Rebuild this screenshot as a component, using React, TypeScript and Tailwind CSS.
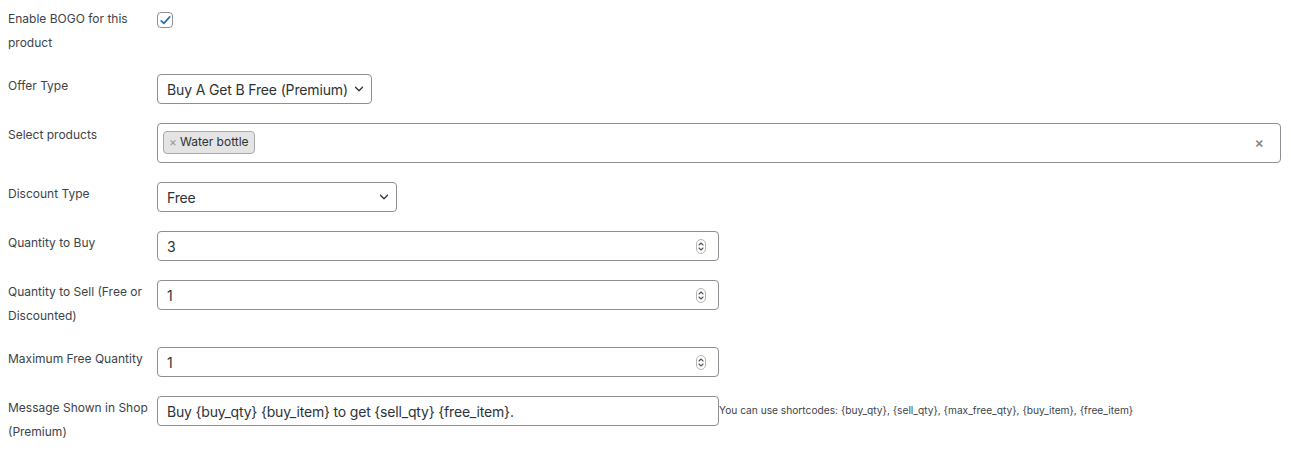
import React from "react";

const labelCls = "w-[149px] shrink-0 text-[12px] leading-6 text-[#3c434a]";
const boxCls =
  "h-[30px] border border-[#8c8f94] rounded-[4px] bg-white flex items-center text-[14px] text-[#2c3338]";

const Chevron = () => (
  <svg width="14" height="14" viewBox="0 0 20 20" fill="none">
    <path d="M5 7.5l5 5 5-5" stroke="#2c3338" strokeWidth="1.8" strokeLinecap="round" strokeLinejoin="round" />
  </svg>
);

const Spinner = () => (
  <svg width="10" height="15" viewBox="0 0 10 15" fill="none">
    <rect x="0.5" y="0.5" width="9" height="14" rx="4.5" stroke="#b4b4b4" />
    <path d="M3 6l2-2 2 2" stroke="#555" strokeWidth="1.1" strokeLinecap="round" strokeLinejoin="round" />
    <path d="M3 9l2 2 2-2" stroke="#555" strokeWidth="1.1" strokeLinecap="round" strokeLinejoin="round" />
  </svg>
);

const Row = ({ label, children }: { label: React.ReactNode; children: React.ReactNode }) => (
  <div className="flex items-start">
    <div className={labelCls}>{label}</div>
    <div className="flex-1 min-w-0">{children}</div>
  </div>
);

const SelectBox = ({ value, width }: { value: string; width: string }) => (
  <div className={boxCls + " justify-between pl-[9px] pr-[5px] " + width}>
    <span className="tracking-[-0.15px]">{value}</span>
    <Chevron />
  </div>
);

const NumberBox = ({ value }: { value: string }) => (
  <div className={boxCls + " w-[562px] justify-between pl-[9px] pr-[12px]"}>
    <span>{value}</span>
    <Spinner />
  </div>
);

export default function App() {
  return (
    <div
      className="w-[1291px] h-[453px] bg-white pl-[8px] pr-[10px] pt-[7px] flex flex-col gap-[19px]"
      style={{ fontFamily: "Inter, 'Noto Sans', sans-serif" }}
    >
      <Row label="Enable BOGO for this product">
        <div className="mt-[5px] w-[16px] h-[16px] border border-[#8c8f94] rounded-[4px] bg-white flex items-center justify-center">
          <svg width="13" height="13" viewBox="0 0 20 20" fill="none">
            <path d="M3.5 10.5l4 4 9-10" stroke="#2271b1" strokeWidth="2.6" strokeLinecap="round" strokeLinejoin="round" />
          </svg>
        </div>
      </Row>

      <Row label="Offer Type">
        <SelectBox value="Buy A Get B Free (Premium)" width="w-[215px]" />
      </Row>

      <Row label="Select products">
        <div className="h-[40px] border border-[#8c8f94] rounded-[4px] bg-white flex items-center justify-between pl-[5px] pr-[16px]">
          <span className="h-[23px] -mt-[2px] flex items-center gap-[3px] px-[5px] bg-[#e4e4e4] border border-[#aaa] rounded-[4px] text-[12px] text-[#2c3338]">
            <span className="text-[#999] text-[12px] leading-none">×</span>
            Water bottle
          </span>
          <span className="text-[#888] text-[14px] font-semibold leading-none">×</span>
        </div>
      </Row>

      <Row label="Discount Type">
        <SelectBox value="Free" width="w-[240px]" />
      </Row>

      <Row label="Quantity to Buy">
        <NumberBox value="3" />
      </Row>

      <Row label="Quantity to Sell (Free or Discounted)">
        <NumberBox value="1" />
      </Row>

      <Row label="Maximum Free Quantity">
        <NumberBox value="1" />
      </Row>

      <Row label="Message Shown in Shop (Premium)">
        <div className="flex items-center">
          <div className={boxCls + " w-[562px] pl-[9px]"}>
            <span className="tracking-[-0.18px]">Buy {"{buy_qty}"} {"{buy_item}"} to get {"{sell_qty}"} {"{free_item}"}.</span>
          </div>
          <span className="text-[10.2px] text-[#3c434a] whitespace-nowrap">
            You can use shortcodes: {"{buy_qty}"}, {"{sell_qty}"}, {"{max_free_qty}"}, {"{buy_item}"}, {"{free_item}"}
          </span>
        </div>
      </Row>
    </div>
  );
}
